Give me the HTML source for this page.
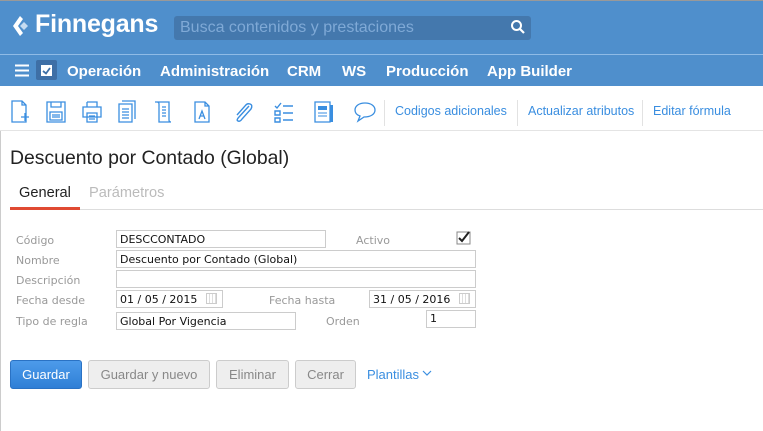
<!DOCTYPE html>
<html><head><meta charset="utf-8"><style>
*{margin:0;padding:0;box-sizing:border-box}
body{width:763px;height:431px;overflow:hidden;background:#fff;font-family:"Liberation Sans",sans-serif;position:relative}
.a{position:absolute}
.top{left:0;top:0;width:763px;height:54px;background:#4f8fcc;border-top:1px solid #999}
.nav{left:0;top:54px;width:763px;height:32px;background:#4f8fcc;border-top:1px solid #8fbbe6}
.nav span{position:absolute;top:8px;color:#fff;font-weight:bold;font-size:15px}
.search{left:174px;top:16px;width:357px;height:24px;background:#4478ad;border-radius:3px;color:#7fa9d6;font-size:16px;padding:3px 6px}
.tb{color:#3a8ee0;font-size:12.5px;top:104px}
.sep{top:100px;width:1px;height:26px;background:#e2e2e2}
.lbl{font-family:"DejaVu Sans",sans-serif;font-size:11px;color:#999}
.inp{border:1px solid #ccc;height:18px;font-family:"DejaVu Sans",sans-serif;font-size:11px;color:#111;padding:1px 3px}
.btn{top:360px;height:29px;border:1px solid #ccc;border-radius:3px;background:#eee;color:#888;font-size:13px;text-align:center;line-height:27px}
svg.i{position:absolute;top:100px}
</style></head><body>
<div class="a top"></div>
<svg class="a" style="left:11px;top:14px" width="22" height="24" viewBox="0 0 22 24"><path d="M9 2 L2 12 L9 22 L12 19 L7 12 L12 5Z" fill="#fff"/><path d="M13 8 L17 12 L13 16 L9 12Z" fill="#c5dbf1"/></svg>
<div class="a" style="left:35px;top:10px;color:#fff;font-weight:bold;font-size:25px;letter-spacing:-0.2px">Finnegans</div>
<div class="a search">Busca contenidos y prestaciones</div>
<svg class="a" style="left:510px;top:19px" width="16" height="16" viewBox="0 0 16 16"><circle cx="6.5" cy="6.5" r="4.5" stroke="#fff" stroke-width="2" fill="none"/><path d="M10 10 L14 14" stroke="#fff" stroke-width="2.2"/></svg>
<div class="a nav">
<svg style="position:absolute;left:15px;top:9px" width="14" height="13"><path d="M0 1.5H14M0 6.5H14M0 11.5H14" stroke="#fff" stroke-width="2"/></svg>
<div style="position:absolute;left:36px;top:5px;width:21px;height:20px;background:#3e6fa6;border-radius:2px"><div style="position:absolute;left:5px;top:5px;width:11px;height:11px;background:#fff"></div><svg style="position:absolute;left:6px;top:7px" width="9" height="8"><path d="M1 4L4 6.5L8 1" stroke="#3e6fa6" stroke-width="1.8" fill="none"/></svg></div>
<span style="left:67px">Operación</span><span style="left:160px">Administración</span><span style="left:287px">CRM</span><span style="left:342px">WS</span><span style="left:386px">Producción</span><span style="left:487px">App Builder</span>
</div>
<svg class="i" style="left:10px" width="20" height="24" fill="none" stroke="#3a8ee0" stroke-width="1.3"><path d="M2 1H12L16 5V22H2Z M12 1V5H16 M11 17H19M15 13V21"/></svg>
<svg class="i" style="left:46px" width="20" height="24" fill="none" stroke="#3a8ee0" stroke-width="1.3"><path d="M1 2H19V22H1Z M5 2V7H15V2 M4 12H16V20H4Z M6 15H14M6 17H14"/></svg>
<svg class="i" style="left:82px" width="20" height="24" fill="none" stroke="#3a8ee0" stroke-width="1.3"><path d="M5 2H15V7 M5 7V2 M1 7H19V17H1Z M5 13H15V22H5Z M7 16H13M7 19H13"/></svg>
<svg class="i" style="left:118px" width="20" height="24" fill="none" stroke="#3a8ee0" stroke-width="1.3"><path d="M4 1H17V19 M1 4H14V22H1Z M4 9H11M4 12H11M4 15H11M4 18H11"/></svg>
<svg class="i" style="left:154px" width="20" height="24" fill="none" stroke="#3a8ee0" stroke-width="1.3"><path d="M1 2H15V20Q15 22 17 22H5V4Q5 2 3 2 M8 7H12M8 10H12M8 13H12M8 16H12"/></svg>
<svg class="i" style="left:194px" width="20" height="24" fill="none" stroke="#3a8ee0" stroke-width="1.3"><path d="M1 2H11L15 6V22H1Z M11 2V6H15 M5 19L8 11L11 19M6 16H10"/></svg>
<svg class="i" style="left:232px" width="22" height="24" fill="none" stroke="#3a8ee0" stroke-width="1.4"><path d="M17 6L7 17Q4 20 6 21Q8 22 10 19L19 9Q21 5 18 4Q15 3 13 6L5 15"/></svg>
<svg class="i" style="left:274px" width="20" height="24" fill="none" stroke="#3a8ee0" stroke-width="1.4"><path d="M1 6L3 8L7 3 M9 6H19 M1 11H6V15H1Z M9 13H19 M1 18H6V22H1Z M9 20H19"/></svg>
<svg class="i" style="left:314px" width="20" height="24"><path d="M1 2H16V22H1Z" fill="none" stroke="#3a8ee0" stroke-width="1.3"/><rect x="4" y="6" width="9" height="4" fill="#3a8ee0"/><path d="M4 13H13M4 16H13" stroke="#3a8ee0"/><rect x="16" y="5" width="3" height="17" fill="#3a8ee0"/></svg>
<svg class="i" style="left:354px" width="22" height="24" fill="none" stroke="#3a8ee0" stroke-width="1.3"><path d="M11 3C5 3 1 6 1 10C1 13 3 15 6 16L4 21L10 17C17 17 21 14 21 10C21 6 17 3 11 3Z"/></svg>
<div class="a sep" style="left:384px"></div>
<div class="a tb" style="left:395px">Codigos adicionales</div>
<div class="a sep" style="left:517px"></div>
<div class="a tb" style="left:528px">Actualizar atributos</div>
<div class="a sep" style="left:642px"></div>
<div class="a tb" style="left:653px">Editar fórmula</div>
<div class="a" style="left:0;top:130px;width:763px;height:1px;background:#e4e4e4"></div>
<div class="a" style="left:0;top:131px;width:1px;height:300px;background:#ccc"></div>
<div class="a" style="left:10px;top:147px;font-size:19.4px;color:#222">Descuento por Contado (Global)</div>
<div class="a" style="left:19px;top:185px;font-size:14.6px;color:#222">General</div>
<div class="a" style="left:89px;top:185px;font-size:14.6px;color:#bbb">Parámetros</div>
<div class="a" style="left:10px;top:209px;width:753px;height:1px;background:#ddd"></div>
<div class="a" style="left:10px;top:207px;width:70px;height:3px;background:#e04a32"></div>
<div class="a lbl" style="left:16px;top:234px">Código</div>
<div class="a inp" style="left:116px;top:230px;width:210px;padding-top:2px">DESCCONTADO</div>
<div class="a lbl" style="left:356px;top:234px">Activo</div>
<svg class="a" style="left:456px;top:231px" width="16" height="14"><rect x="1" y="1" width="13" height="12" fill="#fff" stroke="#888"/><path d="M3 7L6 10L13 1" stroke="#222" stroke-width="2" fill="none"/></svg>
<div class="a lbl" style="left:16px;top:254px">Nombre</div>
<div class="a inp" style="left:116px;top:250px;width:360px;padding-top:2px">Descuento por Contado (Global)</div>
<div class="a lbl" style="left:16px;top:274px">Descripción</div>
<div class="a inp" style="left:116px;top:270px;width:360px"></div>
<div class="a lbl" style="left:16px;top:294px">Fecha desde</div>
<div class="a inp" style="left:116px;top:290px;width:107px;padding-top:2px">01 / 05 / 2015</div>
<div class="a" style="left:206px;top:293px;width:11px;height:11px;border:1px solid #ccc;background:repeating-linear-gradient(90deg,#fff 0 2px,#ddd 2px 3px)"></div>
<div class="a lbl" style="left:269px;top:294px">Fecha hasta</div>
<div class="a inp" style="left:369px;top:290px;width:107px;padding-top:2px">31 / 05 / 2016</div>
<div class="a" style="left:459px;top:293px;width:11px;height:11px;border:1px solid #ccc;background:repeating-linear-gradient(90deg,#fff 0 2px,#ddd 2px 3px)"></div>
<div class="a lbl" style="left:16px;top:315px">Tipo de regla</div>
<div class="a inp" style="left:116px;top:312px;width:180px;height:18px;padding-top:2px">Global Por Vigencia</div>
<div class="a lbl" style="left:326px;top:315px">Orden</div>
<div class="a inp" style="left:426px;top:310px;width:50px">1</div>
<div class="a btn" style="left:10px;width:72px;background:linear-gradient(#4d9bea,#2f7fd6);border-color:#2a72c4;color:#fff">Guardar</div>
<div class="a btn" style="left:88px;width:122px">Guardar y nuevo</div>
<div class="a btn" style="left:216px;width:73px">Eliminar</div>
<div class="a btn" style="left:295px;width:61px">Cerrar</div>
<div class="a" style="left:367px;top:367px;font-size:13px;color:#3a8ee0">Plantillas</div>
<svg class="a" style="left:422px;top:370px" width="10" height="7"><path d="M1 1L5 5L9 1" stroke="#3a8ee0" fill="none" stroke-width="1.2"/></svg>
</body></html>
